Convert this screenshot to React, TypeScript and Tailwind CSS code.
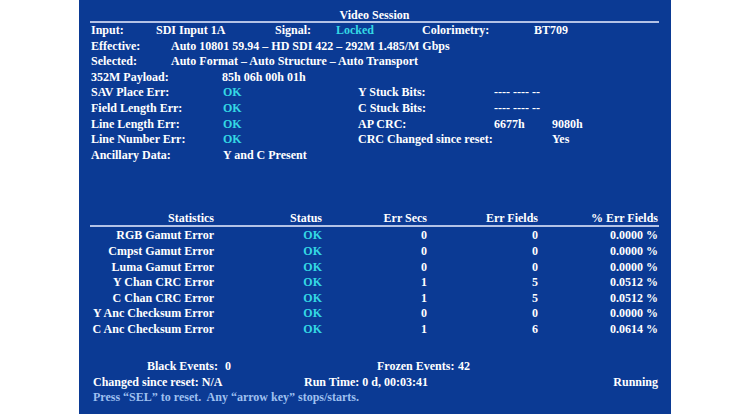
import React from "react";

const C = ({ w, children, cls = "" }: { w: number; children?: React.ReactNode; cls?: string }) => (
  <span className={`shrink-0 whitespace-nowrap ${cls}`} style={{ width: w }}>
    {children}
  </span>
);

const cyan = "text-[#34d8e4]";

const stats = [
  ["RGB Gamut Error", "0", "0", "0.0000 %"],
  ["Cmpst Gamut Error", "0", "0", "0.0000 %"],
  ["Luma Gamut Error", "0", "0", "0.0000 %"],
  ["Y Chan CRC Error", "1", "5", "0.0512 %"],
  ["C Chan CRC Error", "1", "5", "0.0512 %"],
  ["Y Anc Checksum Error", "0", "0", "0.0000 %"],
  ["C Anc Checksum Error", "1", "6", "0.0614 %"],
];

export default function App() {
  return (
    <div className="w-[750px] h-[414px] bg-white flex justify-center font-['Liberation_Serif',serif] font-bold text-[12px] text-white">
      <div className="w-[592px] h-[414px] bg-[#0b3a94] pl-[11px] pr-[12px] flex flex-col">
        <div className="pt-[8px] leading-[14px] text-center">Video Session</div>
        <div className="h-[2px] mt-[-1px] bg-[#b3c2e6]" />
        <div className="pl-[1px] leading-[15.6px] flex flex-col">
          <div className="flex">
            <C w={65}>Input:</C>
            <C w={119}>SDI Input 1A</C>
            <C w={61}>Signal:</C>
            <C w={86} cls={cyan}>Locked</C>
            <C w={112}>Colorimetry:</C>
            <C w={80}>BT709</C>
          </div>
          <div className="flex">
            <C w={80}>Effective:</C>
            <C w={400}>Auto 10801 59.94 – HD SDI 422 – 292M 1.485/M Gbps</C>
          </div>
          <div className="flex">
            <C w={80}>Selected:</C>
            <C w={400}>Auto Format – Auto Structure – Auto Transport</C>
          </div>
          <div className="flex">
            <C w={131}>352M Payload:</C>
            <C w={200}>85h 06h 00h 01h</C>
          </div>
          <div className="flex">
            <C w={132}>SAV Place Err:</C>
            <C w={135} cls={cyan}>OK</C>
            <C w={136}>Y Stuck Bits:</C>
            <C w={100}>---- ---- --</C>
          </div>
          <div className="flex">
            <C w={132}>Field Length Err:</C>
            <C w={135} cls={cyan}>OK</C>
            <C w={136}>C Stuck Bits:</C>
            <C w={100}>---- ---- --</C>
          </div>
          <div className="flex">
            <C w={132}>Line Length Err:</C>
            <C w={135} cls={cyan}>OK</C>
            <C w={136}>AP CRC:</C>
            <C w={58}>6677h</C>
            <C w={60}>9080h</C>
          </div>
          <div className="flex">
            <C w={132}>Line Number Err:</C>
            <C w={135} cls={cyan}>OK</C>
            <C w={194}>CRC Changed since reset:</C>
            <C w={60}>Yes</C>
          </div>
          <div className="flex">
            <C w={132}>Ancillary Data:</C>
            <C w={200}>Y and C Present</C>
          </div>
        </div>

        <div className="mt-[48px] leading-[15.6px] flex text-right">
          <C w={124}>Statistics</C>
          <C w={108}>Status</C>
          <C w={105}>Err Secs</C>
          <C w={111}>Err Fields</C>
          <C w={120}>% Err Fields</C>
        </div>
        <div className="h-[2px] mt-[-1.6px] bg-[#b3c2e6]" />
        <div className="leading-[15.6px] flex flex-col pt-[1px]">
          {stats.map((r) => (
            <div key={r[0]} className="flex text-right">
              <C w={124}>{r[0]}</C>
              <C w={108} cls={cyan}>OK</C>
              <C w={105}>{r[1]}</C>
              <C w={111}>{r[2]}</C>
              <C w={120}>{r[3]}</C>
            </div>
          ))}
        </div>

        <div className="mt-[21.7px] leading-[15.6px] flex flex-col">
          <div className="flex">
            <C w={57} />
            <C w={78}>Black Events:</C>
            <C w={152}>0</C>
            <C w={81}>Frozen Events:</C>
            <C w={40}>42</C>
          </div>
          <div className="flex pl-[3px]">
            <C w={211}>Changed since reset: N/A</C>
            <C w={200}>Run Time: 0 d, 00:03:41</C>
            <span className="flex-1 text-right pr-[1px]">Running</span>
          </div>
          <div className="pl-[3px] text-[#9fc0f0] whitespace-pre">
            Press “SEL” to reset.  Any “arrow key” stops/starts.
          </div>
        </div>
      </div>
    </div>
  );
}
